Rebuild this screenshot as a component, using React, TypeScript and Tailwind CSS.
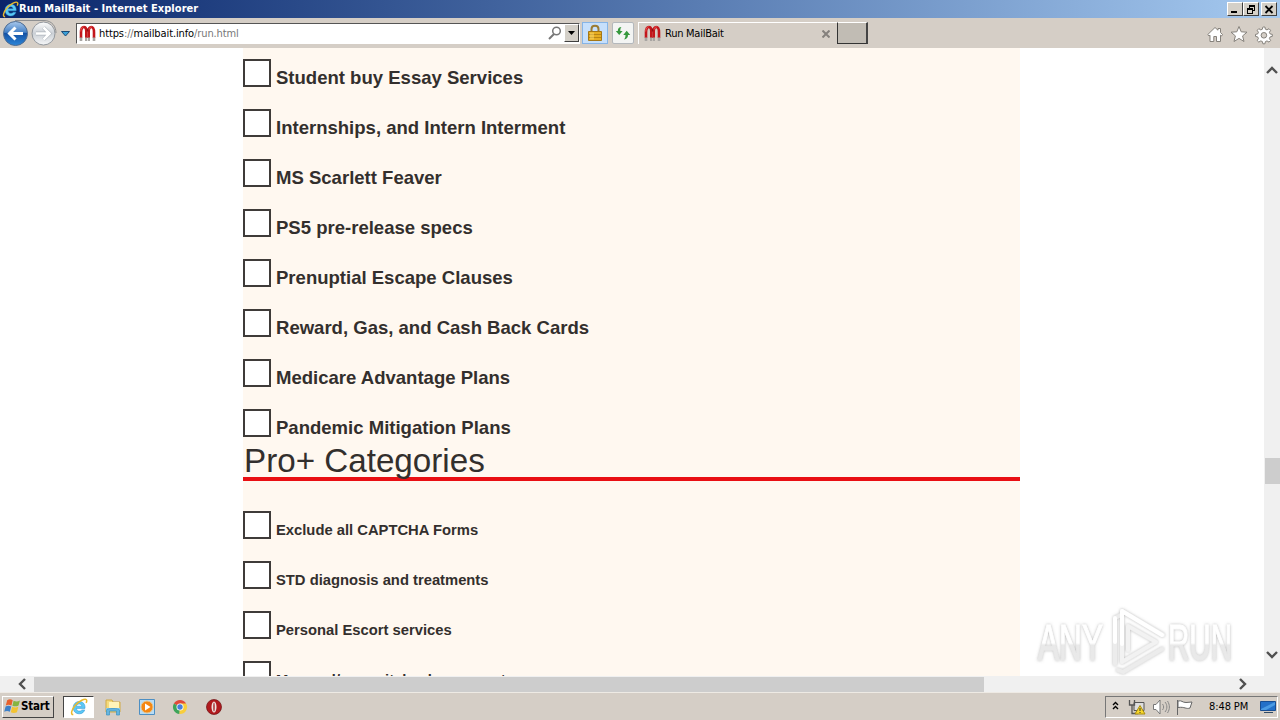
import type { ReactNode } from "react";
import clsx from "clsx";

const CATEGORIES = [
  "Student buy Essay Services",
  "Internships, and Intern Interment",
  "MS Scarlett Feaver",
  "PS5 pre-release specs",
  "Prenuptial Escape Clauses",
  "Reward, Gas, and Cash Back Cards",
  "Medicare Advantage Plans",
  "Pandemic Mitigation Plans",
];

const PRO_CATEGORIES = [
  "Exclude all CAPTCHA Forms",
  "STD diagnosis and treatments",
  "Personal Escort services",
  "Men and/or genital enhancement",
];

function IeLogo({ className }: { className?: string }) {
  return (
    <svg viewBox="0 0 18 18" className={className}>
      <path
        d="M15 10.400H6.500c.2 1.800 1.300 2.700 2.900 2.700 1.200 0 2-.4 2.500-1.200h2.800c-.8 2.500-2.800 3.900-5.400 3.900-3.600 0-6.100-2.500-6.100-6.100s2.500-6.200 6.100-6.200c3.700 0 6.100 2.700 5.700 6.900ZM6.500 8.200h5.300c-.3-1.500-1.200-2.200-2.600-2.200S6.800 6.700 6.500 8.200Z"
        fill="#5bc8f5"
        stroke="#2a8fd0"
        strokeWidth=".5"
      />
      <path
        d="M3.300 16.600C.2 16.800 1.600 11.500 5.300 7.300 9.200 2.900 15 .1 16.400 1.700c.7.800.3 2-.3 3.200"
        fill="none"
        stroke="#eab92d"
        strokeWidth="1.500"
      />
    </svg>
  );
}

function MagnetIcon() {
  return (
    <svg width="17" height="17" viewBox="0 0 17 17" className="shrink-0">
      <path d="M2 13V7.500C2 3.500 3.300 2 4.800 2S7.300 3.200 7.300 6V13" fill="none" stroke="#c3161c" strokeWidth="2.600" />
      <path d="M9.700 13V6c0-2.800 1-4 2.500-4S15 3.500 15 7.500V13" fill="none" stroke="#c3161c" strokeWidth="2.600" />
      <path d="M7.800 3.500h1.400v3H7.800z" fill="#8e1014" />
      <path d="M1.700 6.500C2 3.500 3 2 4.500 1.600M10 4.500c.5-2 1.500-2.800 2.800-2.700" fill="none" stroke="#ee5e58" strokeWidth=".9" />
      <path d="M.7 12.500h2.600V16H.7zM6 12.500h2.300V16H6zM9 12.500h2V16H9zM13.700 12.500h2.600V16h-2.600z" fill="#a8a5a2" />
    </svg>
  );
}

function CaptionButton({ children }: { children: ReactNode }) {
  return (
    <button className="flex h-[14px] w-4 items-center justify-center border border-t-white border-r-[#404040] border-b-[#404040] border-l-white bg-[#d4d0c8]">
      <svg width="12" height="11" viewBox="0 0 12 11" fill="none" stroke="#000" className="shrink-0" shapeRendering="crispEdges">
        {children}
      </svg>
    </button>
  );
}

function TitleBar() {
  return (
    <header className="flex h-[18px] items-center bg-linear-to-r from-[#0a246a] to-[#a6caf0] pr-[3px] pl-[2px]">
      <IeLogo className="h-[17px] w-[17px]" />
      <span className="flex-1 font-['DejaVu_Sans_Condensed','DejaVu_Sans',sans-serif] text-[11px] leading-[18px] font-bold tracking-[0.05px] whitespace-nowrap text-white">
        Run MailBait - Internet Explorer
      </span>
      <div className="flex">
        <CaptionButton>
          <path d="M2 8h6" strokeWidth="2" />
        </CaptionButton>
        <CaptionButton>
          <path d="M4 1.500h6M4.500 1v3M9.500 1v6M8 6.500h2" />
          <path d="M4 2h6M2 4.500h6M2 5.500h6M2.500 4v6M7.500 4v6M2 9.500h6" />
        </CaptionButton>
        <span className="w-[2px]" />
        <CaptionButton>
          <path d="M2.500 2l7 7M9.500 2l-7 7" strokeWidth="1.800" shapeRendering="auto" />
        </CaptionButton>
      </div>
    </header>
  );
}

function NavButtons() {
  return (
    <svg width="76" height="30" viewBox="0 0 76 30" className="shrink-0">
      <defs>
        <linearGradient id="back" x2="0" y2="1">
          <stop offset="0" stopColor="#a9c8ec" />
          <stop offset=".45" stopColor="#4581c6" />
          <stop offset=".5" stopColor="#1552a5" />
          <stop offset="1" stopColor="#2c86d8" />
        </linearGradient>
        <linearGradient id="forward" x2="0" y2="1">
          <stop offset="0" stopColor="#fdfdfd" />
          <stop offset=".5" stopColor="#cbd0d6" />
          <stop offset="1" stopColor="#f6f7f8" />
        </linearGradient>
      </defs>
      <path d="M15 2.500h29c8 0 12 6 12 12.500" fill="none" stroke="#8f9092" />
      <circle cx="15.500" cy="15.500" r="12" fill="url(#back)" stroke="#4d6b91" />
      <circle cx="43.500" cy="15.500" r="11.500" fill="url(#forward)" stroke="#92979d" />
      <path d="M23 15.500H10M15.500 9.500l-6 6 6 6" fill="none" stroke="#fff" strokeWidth="3" />
      <path d="M36 15.500h13M43.500 9.500l6 6-6 6" fill="none" stroke="#aeb4bb" strokeWidth="3.800" />
      <path d="M36 15.500h13M43.500 9.500l6 6-6 6" fill="none" stroke="#fff" strokeWidth="2.600" />
      <path d="M61.500 13.500h8l-4 4.500z" fill="#3aa0d8" stroke="#1b4b77" />
    </svg>
  );
}

function AddressBar() {
  return (
    <div className="flex h-[21px] w-[504px] items-center border border-t-[#555] border-r-white border-b-white border-l-[#555] bg-white pl-[2px]">
      <MagnetIcon />
      <span className="ml-[3px] flex-1 pt-[2px] font-['DejaVu_Sans_Condensed','DejaVu_Sans',sans-serif] text-[11px] tracking-[-0.11px] text-[#777]">
        <span className="text-black">https</span>://<span className="text-black">mailbait.info</span>/run.html
      </span>
      <svg width="14" height="14" viewBox="0 0 14 14" fill="none" stroke="#777" strokeWidth="1.500" className="mr-[2px]">
        <circle cx="8.500" cy="5" r="3.800" />
        <path d="M6 8 1 13" strokeWidth="2" />
      </svg>
      <button className="flex h-[18px] w-[15px] items-center justify-center border border-t-white border-r-[#404040] border-b-[#404040] border-l-white bg-[#d4d0c8]">
        <svg width="7" height="4" viewBox="0 0 7 4">
          <path d="M0 0h7L3.500 4z" />
        </svg>
      </button>
    </div>
  );
}

function LockButton() {
  return (
    <button className="ml-[2px] flex h-[22px] w-[26px] items-center justify-center border border-[#86b4e6] bg-[#c6dffb]">
      <svg width="14" height="18" viewBox="0 0 14 18">
        <path d="M3.500 8V5c0-4.500 7-4.500 7 0v3" fill="none" stroke="#9b7b32" strokeWidth="2" />
        <path d="M.5 7.500h13v9H.5z" fill="#e6ad22" stroke="#a47717" />
        <path d="M1 10.500h12M1 13.500h12" stroke="#b98514" />
        <path d="M2 8.500h4v7H2z" fill="#ffe27a" opacity=".45" />
      </svg>
    </button>
  );
}

function RefreshButton() {
  return (
    <button className="ml-[4px] flex h-[22px] w-[22px] items-center justify-center rounded-[2px] border border-[#b4b8bc] bg-[#f3f4f3]">
      <svg width="16" height="16" viewBox="0 0 16 16" fill="#35983d" className="shrink-0">
        <path d="M6.500 2C4 2 2.800 3.500 2.800 6H.8l3.400 4L7.600 6H5.300c0-2 .2-2.800 1.200-4ZM9 14.500c2.800-.3 4-2 4-4.500h2.200l-3.500-4.200L8.200 10h2.300c0 2-.3 3.200-1.500 4.500Z" />
      </svg>
    </button>
  );
}

function Tools() {
  return (
    <svg width="68" height="20" viewBox="0 0 68 20" fill="#fff" stroke="#85817b" className="mt-[3px] ml-auto">
      <path d="M.8 9.500 8 2.500l3 2.700V3.500h2.500v4l2 2-1 1.500-1-.8v6.300h-4v-5H6.800v5H3v-6.300l-1 .8z" />
      <path d="m32 1.500 2.200 5.300 5.800.4-4.400 3.700 1.400 5.600-5-3.100-5 3.100 1.400-5.600L24 7.200l5.800-.4z" />
      <path d="m55.700 2.300.8-.3h1.400l.5 2.200 1.600.7 2-1.200 1.600 1.600-1.200 2 .7 1.600 2.200.5v2l-2.200.5-.7 1.600 1.200 2-1.600 1.600-2-1.200-1.600.7-.5 2.200h-2l-.5-2.200-1.600-.7-2 1.200-1.600-1.600 1.200-2-.7-1.600-2.200-.5v-2l2.200-.5.7-1.600-1.200-2 1.600-1.600 2 1.200 1.600-.7z" />
      <circle cx="56.900" cy="10.300" r="2.800" fill="#d4cec6" />
    </svg>
  );
}

function NavBar() {
  return (
    <nav className="flex h-[30px] items-center bg-[#d5cec6] pr-[5px]">
      <NavButtons />
      <AddressBar />
      <LockButton />
      <RefreshButton />
      <div className="ml-[4px] flex h-[22px] w-[199px] items-center border-t border-l border-white pl-[5px]">
        <MagnetIcon />
        <span className="ml-[4px] flex-1 pt-[2px] font-['DejaVu_Sans_Condensed','DejaVu_Sans',sans-serif] text-[11px] tracking-[-0.25px] text-black">
          Run MailBait
        </span>
        <svg width="8" height="8" viewBox="0 0 8 8" stroke="#85817d" strokeWidth="2" className="mr-[7px]">
          <path d="m.5.5 7 7m0-7-7 7" />
        </svg>
      </div>
      <button className="h-[22px] w-[31px] border border-t-white border-r-2 border-r-[#444] border-b-[#333] border-l-[#333] bg-[#c1bcb4]" />
      <Tools />
    </nav>
  );
}

function CategoryRow({ label, small }: { label: string; small?: boolean }) {
  return (
    <label className="flex h-[50px] shrink-0 items-start">
      <span className="h-7 w-7 shrink-0 border-2 border-[#3f3b39] bg-white" />
      <span
        className={clsx(
          "ml-[5px] font-bold whitespace-nowrap",
          small ? "pt-[9px] text-[14.780px] leading-[20px]" : "pt-[8px] text-[18.540px] leading-[22px]",
        )}
      >
        {label}
      </span>
    </label>
  );
}

function Watermark() {
  return (
    <svg width="204" height="72" viewBox="0 0 204 72" className="absolute top-[556px] left-[1034px] overflow-visible">
      <defs>
        <linearGradient id="wm" x2="0" y2="1">
          <stop offset=".5" stopColor="#fff" />
          <stop offset=".54" stopColor="#e9e9e9" />
        </linearGradient>
        <filter id="glow" x="-20%" y="-20%" width="140%" height="140%">
          <feDropShadow dx="0" dy="0" stdDeviation="1.600" floodColor="#888" floodOpacity=".6" />
        </filter>
      </defs>
      <g
        filter="url(#glow)"
        fill="url(#wm)"
        stroke="url(#wm)"
        strokeWidth="1"
        className="font-['Liberation_Sans',Arial,sans-serif] text-[50px]"
      >
        <text x="4" y="56" textLength="65" lengthAdjust="spacingAndGlyphs">
          ANY
        </text>
        <text x="134" y="56" textLength="64" lengthAdjust="spacingAndGlyphs">
          RUN
        </text>
        <g fill="none" strokeWidth="4" strokeLinejoin="round" strokeLinecap="round">
          <path d="M81 60V14l6-3M84 66l5 2 39-23" stroke="#ececec" />
          <path d="M94 46V22l28 16-34 20V7l41 24" stroke="#f2f2f2" />
          <path d="M88 40V7l40 24M81 38V14" stroke="#fff" />
        </g>
      </g>
    </svg>
  );
}

function Chevron({ d }: { d: string }) {
  return (
    <svg width="12" height="12" viewBox="0 0 12 12" fill="none" stroke="#505050" strokeWidth="2.400">
      <path d={d} />
    </svg>
  );
}

function Page() {
  return (
    <div className="relative flex h-[628px] overflow-hidden bg-white">
      <main className="ml-[243px] flex w-[777px] flex-col bg-[#fff8f0] pt-[11px] text-[#332f2d]">
        {CATEGORIES.map((label) => (
          <CategoryRow key={label} label={label} />
        ))}
        <h2 className="-mt-[18px] mb-[30px] h-[40px] shrink-0 border-b-4 border-[#e90f13] pl-px text-[33.200px] leading-[40px]">
          Pro+ Categories
        </h2>
        {PRO_CATEGORIES.map((label) => (
          <CategoryRow key={label} label={label} small />
        ))}
      </main>
      <aside className="ml-auto flex w-4 flex-col items-center bg-[#f0f0f0] pt-4">
        <Chevron d="M1 9l5-5 5 5" />
        <div className="mt-[382px] ml-px h-[26px] w-[15px] bg-[#cdcdcd]" />
        <div className="mt-[165px]">
          <Chevron d="M1 3l5 5 5-5" />
        </div>
      </aside>
      <Watermark />
    </div>
  );
}

function HorizontalScrollbar() {
  return (
    <div className="flex h-4 items-center bg-[#f0f0f0] pl-4">
      <Chevron d="M9 1 4 6l5 5" />
      <div className="ml-[6px] h-[15px] w-[950px] bg-[#cdcdcd]" />
      <div className="ml-[253px]">
        <Chevron d="M3 1l5 5-5 5" />
      </div>
    </div>
  );
}

function WindowsFlag() {
  return (
    <svg width="17" height="17" viewBox="0 0 16 16" className="shrink-0">
      <path d="M3 2c2-1.200 3.500-1 5.200 0L7 7C5 6 3.500 6 1.700 7z" fill="#e8612c" />
      <path d="M9 2.500c2 1 4 1 6-.2L13.700 7c-2 1.200-4 1-5.800.2z" fill="#86b440" />
      <path d="M1.500 8C3.300 7 5 7 6.800 8l-1.300 5C3.700 12 2 12 .2 13z" fill="#3d80c8" />
      <path d="M7.700 8.300c2 1 3.800 1 5.800 0l-1.300 5c-2 1-4 1-5.800 0z" fill="#f3c332" />
    </svg>
  );
}

function QuickLaunch() {
  return (
    <>
      <svg width="18" height="18" viewBox="0 0 18 18" className="ml-[10px]">
        <path d="M2 2h6l1 2h7v10H2z" fill="#f4da7c" stroke="#d1aa45" />
        <path d="M5 4h10v7H5z" fill="#fff4b8" />
        <path d="M2 10h14v3H2z" fill="#8ccbea" />
        <path d="M2.500 17v-5c0-2 13-2 13 0v5h-3v-4h-7v4z" fill="#65b5df" stroke="#3b92c3" strokeWidth=".7" />
      </svg>
      <svg width="18" height="18" viewBox="0 0 18 18" className="ml-[16px]">
        <path d="M1.500 1.500h15v15h-15z" fill="#b8dcf5" stroke="#4d8fc3" />
        <circle cx="9" cy="9" r="6" fill="#f58712" stroke="#e9c58a" />
        <path d="M7 5.500v7L12.500 9z" fill="#fff" />
      </svg>
      <svg width="16" height="16" viewBox="0 0 16 16" className="ml-[16px]">
        <path d="M8 8 1.900 4.500a7 7 0 0 1 12.200 0z" fill="#e04a3a" />
        <path d="M8 8 7.500 15A7 7 0 0 1 1.900 4.500z" fill="#3ea45a" />
        <path d="M8 8V4.500h6.100A7 7 0 0 1 7.500 15z" fill="#f8ce3c" />
        <circle cx="8" cy="8" r="3.500" fill="#fff" />
        <circle cx="8" cy="8" r="2.700" fill="#477fdb" />
      </svg>
      <svg width="16" height="16" viewBox="0 0 16 16" className="ml-[18px]">
        <circle cx="8" cy="8" r="7.500" fill="#b11a1e" stroke="#6d1012" strokeWidth=".7" />
        <ellipse cx="8" cy="8" rx="2.500" ry="5.600" fill="#eee5e2" />
        <ellipse cx="8" cy="8" rx=".9" ry="4.500" fill="#b3484b" />
      </svg>
    </>
  );
}

function TrayIcons() {
  return (
    <svg width="86" height="20" viewBox="0 0 86 20" fill="none">
      <path d="m3 8 2.500-2.500L8 8M3 12l2.500-2.500L8 12" stroke="#000" strokeWidth="1.400" />
      <path d="M24 5.500h10v8H24z" fill="#dedede" stroke="#555" />
      <path d="M19.500 3v5h5V3M22 8v8.500h6" stroke="#555" strokeWidth="1.300" />
      <path d="m30 8.500 5 8.500H25z" fill="#f7d72a" stroke="#a78b12" />
      <path d="M30 11v3m0 1v1" stroke="#333" />
      <path d="M43.500 7.500H46l4-4.500v14l-4-4.500h-2.500z" fill="#fff" stroke="#777" />
      <path d="M52.500 7c1.500 2 1.500 4 0 6M55 5c2.500 3 2.500 7 0 10M57.500 4c2.500 4 2.500 8 0 12" stroke="#888" />
      <path d="M67.500 3v15M68 4c4-1 4 1.500 8 1.500l6-.5-2 6c-4 1.500-5-1.500-12-.5z" fill="#fff" stroke="#666" />
    </svg>
  );
}

function Taskbar() {
  return (
    <footer className="flex h-[28px] items-center border-t border-[#eeeae4] bg-[#d5cec6] pr-[2px] pl-[2px]">
      <button className="flex h-[22px] w-[52px] items-center border border-t-white border-r-[#444] border-b-[#444] border-l-white pl-px font-['DejaVu_Sans_Condensed','DejaVu_Sans',sans-serif] text-[11.500px] font-bold tracking-[-0.2px] text-black">
        <WindowsFlag />
        <span className="pt-px">Start</span>
      </button>
      <div className="ml-[9px] flex h-[22px] w-[31px] items-center justify-center border border-t-[#444] border-r-white border-b-white border-l-[#444] bg-white">
        <IeLogo className="h-[18px] w-[18px]" />
      </div>
      <QuickLaunch />
      <div className="ml-auto flex h-[22px] w-[173px] items-center border border-t-[#777] border-r-white border-b-white border-l-[#777] pl-[4px]">
        <TrayIcons />
        <span className="ml-[13px] pt-[2px] font-['DejaVu_Sans_Condensed','DejaVu_Sans',sans-serif] text-[11px] tracking-[-0.1px] whitespace-nowrap text-black">
          8:48 PM
        </span>
        <svg width="16" height="14" viewBox="0 0 16 14" className="mr-px ml-auto">
          <path d="M.5 1.500h15v9H.5z" fill="#2470c8" stroke="#184d92" />
          <path d="M1 9 15 2v3L6 10H1z" fill="#4b9be3" />
          <path d="M4 12.500h9" stroke="#314a65" />
        </svg>
      </div>
    </footer>
  );
}

export default function App() {
  return (
    <div className="flex h-[720px] w-[1280px] flex-col overflow-hidden font-['Liberation_Sans',Arial,sans-serif]">
      <TitleBar />
      <NavBar />
      <Page />
      <HorizontalScrollbar />
      <Taskbar />
    </div>
  );
}
